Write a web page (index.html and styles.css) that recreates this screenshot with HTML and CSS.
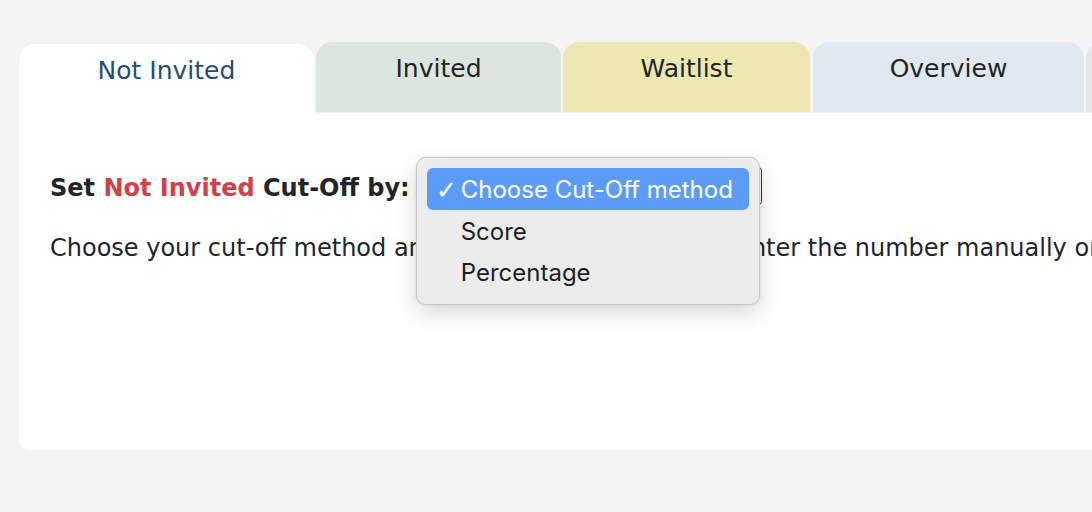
FILE: index.html
```html
<!DOCTYPE html>
<html lang="en">
<head>
<meta charset="utf-8">
<title>Cut-Off</title>
<link rel="stylesheet" href="styles.css">
</head>
<body>
<div class="page">
  <div class="tabs">
    <div class="tab tab-active">Not Invited</div>
    <div class="tab tab-invited">Invited</div>
    <div class="tab tab-waitlist">Waitlist</div>
    <div class="tab tab-overview">Overview</div>
    <div class="tab tab-extra"></div>
  </div>
  <div class="panel">
    <div class="cutoff-row">
      <span class="cutoff-label">Set <span class="accent">Not Invited</span> Cut-Off by:</span>
      <div class="select-wrap">
        <div class="select-box"></div>
        <ul class="menu">
          <li class="menu-item menu-item-selected"><span class="check">✓</span>Choose Cut-Off method</li>
          <li class="menu-item">Score</li>
          <li class="menu-item">Percentage</li>
        </ul>
      </div>
    </div>
    <p class="help">Choose your cut-off method and then move the slider or enter the number manually or type it in below.</p>
  </div>
</div>
</body>
</html>
```
FILE: styles.css
```css
html, body {
  margin: 0;
  padding: 0;
  background: #f4f4f4;
  height: 100%;
  overflow: hidden;
}
body {
  font-family: "DejaVu Sans", Verdana, sans-serif;
  color: #212529;
}
.page {
  padding: 42px 0 0 19px;
}
.tabs {
  display: flex;
  align-items: flex-end;
  gap: 2px;
  height: 71px;
}
.tab {
  box-sizing: border-box;
  height: 70px;
  border-radius: 16px 16px 0 0;
  text-align: center;
  font-size: 25px;
  line-height: 26px;
  padding-top: 14px;
  flex: none;
  white-space: nowrap;
}
.tab-active {
  width: 295px;
  height: 69px;
  background: #ffffff;
  color: #1f4e79;
  padding-top: 14px;
}
.tab-invited { width: 245px; background: #dce6df; }
.tab-waitlist { width: 247px; background: #ede7b1; }
.tab-overview { width: 271px; background: #e1e9f0; margin-left: 1px; }
.tab-extra { width: 60px; background: #dfe8ef; }
.tabs .tab-invited, .tabs .tab-waitlist, .tabs .tab-overview, .tabs .tab-extra {
  height: 70px;
  margin-bottom: 1px;
}
.panel {
  background: #ffffff;
  height: 337px;
  box-sizing: border-box;
  padding: 53px 0 0 31px;
  border-radius: 0 0 0 10px;
  position: relative;
}
.cutoff-row {
  display: flex;
  align-items: center;
  height: 40px;
}
.cutoff-label {
  font-weight: bold;
  font-size: 24px;
  white-space: nowrap;
  padding-top: 3px;
}
.accent { color: #d0414a; }
.select-wrap {
  position: relative;
  margin-left: 13px;
  width: 339px;
  height: 40px;
  flex: none;
}
.select-box {
  box-sizing: border-box;
  width: 100%;
  height: 100%;
  border: 1.5px solid #3a3a3a;
  border-radius: 5px;
  background: #fff;
}
.menu {
  position: absolute;
  left: -7px;
  top: -9px;
  width: 344px;
  height: 148px;
  box-sizing: border-box;
  margin: 0;
  padding: 10px 10px 0 10px;
  list-style: none;
  background: #ececec;
  border: 1px solid #c6c6c6;
  border-radius: 10px;
  box-shadow: 0 8px 22px rgba(0,0,0,0.16), 0 0 3px rgba(0,0,0,0.08);
  font-family: Inter, "Noto Sans", sans-serif;
  font-size: 24px;
  color: #1e1e1e;
}
.menu-item {
  box-sizing: border-box;
  height: 41px;
  line-height: 39px;
  padding: 2px 0 0 34px;
  border-radius: 6px;
  white-space: nowrap;
  position: relative;
}
.menu-item-selected {
  height: 42px;
  line-height: 40px;
  background: #5c9cf8;
  color: #ffffff;
}
.check {
  position: absolute;
  left: 9px;
  top: 2px;
  font-family: "DejaVu Sans", sans-serif;
  font-size: 26px;
  font-weight: bold;
}
.help {
  margin: 27px 0 0 0;
  font-size: 24px;
  line-height: 30px;
  white-space: nowrap;
}
```
